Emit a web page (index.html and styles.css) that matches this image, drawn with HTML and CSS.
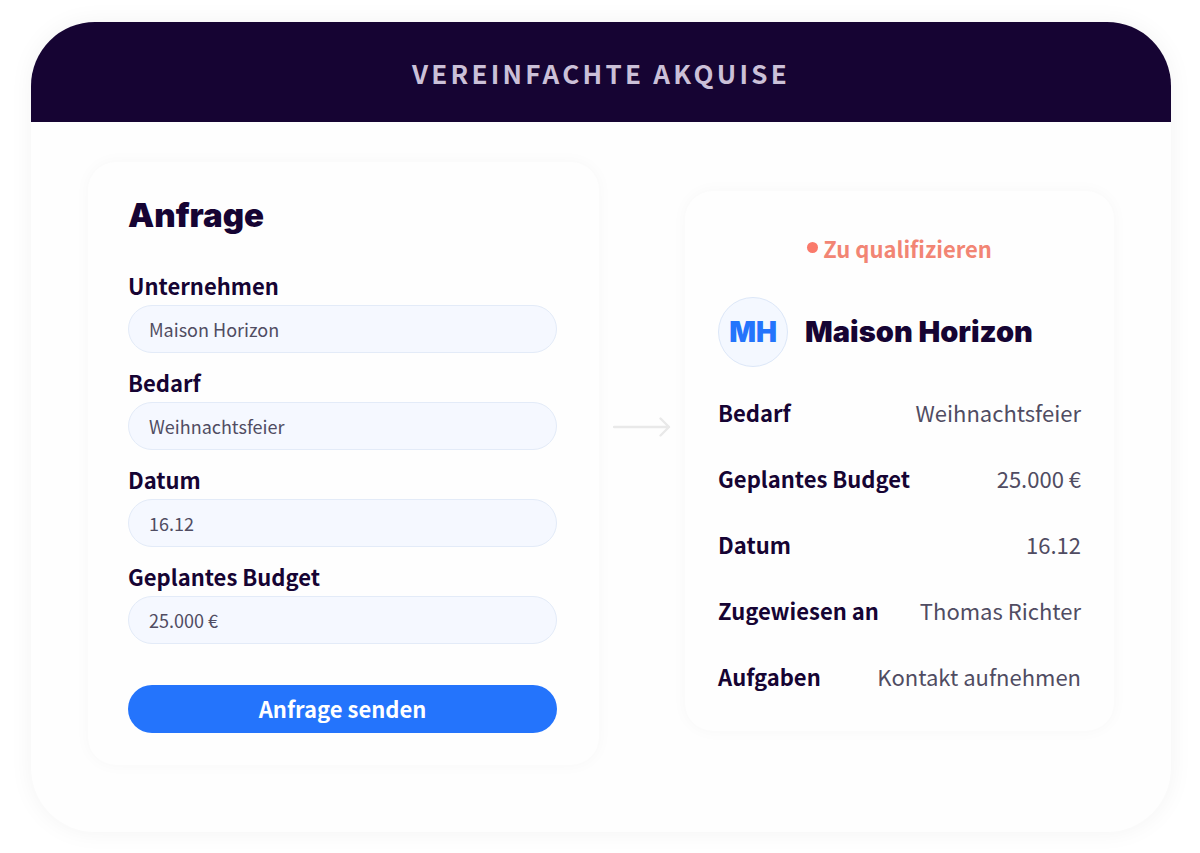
FILE: index.html
```html
<!DOCTYPE html>
<html lang="de">
<head>
    <meta charset="UTF-8">
    <meta name="viewport" content="width=device-width, initial-scale=1.0">
    <title>Vereinfachte Akquise</title>
    <link rel="stylesheet" href="styles.css">
</head>
<body>
    <div class="container">
        <header class="header">
            <h1>VEREINFACHTE AKQUISE</h1>
        </header>
        <main class="content">
            <form class="card form-card">
                <h2>Anfrage</h2>
                <div class="field">
                    <label for="company">Unternehmen</label>
                    <input type="text" id="company" value="Maison Horizon">
                </div>
                <div class="field">
                    <label for="need">Bedarf</label>
                    <input type="text" id="need" value="Weihnachtsfeier">
                </div>
                <div class="field">
                    <label for="date">Datum</label>
                    <input type="text" id="date" value="16.12">
                </div>
                <div class="field">
                    <label for="budget">Geplantes Budget</label>
                    <input type="text" id="budget" value="25.000 €">
                </div>
                <button type="button">Anfrage senden</button>
            </form>

            <svg class="arrow" width="58" height="20" viewBox="0 0 58 20" fill="none" stroke="#e9e9e9" stroke-width="2.4" stroke-linecap="round" stroke-linejoin="round" aria-hidden="true">
                <path d="M1 10H56M47.500 1.500L56 10L47.500 18.500"/>
            </svg>

            <section class="card lead-card">
                <div class="status"><span class="dot"></span>Zu qualifizieren</div>
                <div class="lead">
                    <div class="avatar">MH</div>
                    <h3>Maison Horizon</h3>
                </div>
                <dl class="details">
                    <div class="row"><dt>Bedarf</dt><dd>Weihnachtsfeier</dd></div>
                    <div class="row"><dt>Geplantes Budget</dt><dd>25.000 €</dd></div>
                    <div class="row"><dt>Datum</dt><dd>16.12</dd></div>
                    <div class="row"><dt>Zugewiesen an</dt><dd>Thomas Richter</dd></div>
                    <div class="row"><dt>Aufgaben</dt><dd>Kontakt aufnehmen</dd></div>
                </dl>
            </section>
        </main>
    </div>
</body>
</html>
```
FILE: styles.css
```css
* {
    box-sizing: border-box;
}
body {
    margin: 0;
    padding: 22px 29px 20px 31px;
    background-color: #fff;
    color: #160433;
    font-family: "Noto Sans CJK SC", "Open Sans", sans-serif;
    font-size: 22px;
    line-height: 34px;
}
h1, h2, h3, dl, dd {
    margin: 0;
}
.container {
    border-radius: 64px;
    background-color: #fefefe;
    box-shadow: 0 0 24px rgba(0, 0, 0, 0.05);
    overflow: hidden;
}
.header {
    padding: 33px 20px 31px;
    background-color: #160433;
    text-align: center;
}
.header h1 {
    color: #cbc0d8;
    font-size: 26px;
    line-height: 36px;
    font-weight: bold;
    letter-spacing: 0.125em;
}
.content {
    display: grid;
    grid-template-columns: 510fr auto 428fr;
    align-items: center;
    gap: 14px;
    padding: 40px 57px 67px;
}
.card {
    border-radius: 28px;
    background-color: #fefefe;
    box-shadow: 0 0 16px rgba(0, 0, 0, 0.03);
}
.form-card {
    padding: 31px 42px 32px 40px;
}
.form-card h2 {
    margin-bottom: 31px;
    font-family: Inter, sans-serif;
    font-size: 33px;
    line-height: 44px;
    font-weight: 900;
}
.field {
    margin-bottom: 12px;
}
.field label {
    display: block;
    margin-bottom: 3px;
    font-weight: bold;
}
.field input {
    display: block;
    width: 100%;
    height: 48px;
    padding: 0 20px;
    border: 1px solid #e3ebf8;
    border-radius: 24px;
    background-color: #f5f8ff;
    color: #504c62;
    font-family: inherit;
    font-size: 18px;
    outline: none;
}
.field input:focus {
    border-color: #2474fc;
}
button {
    display: block;
    width: 100%;
    height: 48px;
    margin-top: 41px;
    padding: 0 0 3px;
    border: none;
    border-radius: 24px;
    background-color: #2474fc;
    color: #fff;
    font-family: inherit;
    font-size: 22px;
    font-weight: bold;
    cursor: pointer;
}
.arrow {
    margin-bottom: 74px;
}
.lead-card {
    margin-bottom: 6px;
    padding: 40px 33px 38px;
}
.status {
    display: flex;
    align-items: center;
    justify-content: center;
    gap: 5px;
    margin-bottom: 32px;
    color: #f28574;
    font-weight: bold;
}
.dot {
    width: 11px;
    height: 11px;
    border-radius: 50%;
    background-color: #fa7a6b;
}
.lead {
    display: flex;
    align-items: center;
    gap: 17px;
    margin-bottom: 28px;
}
.avatar {
    display: flex;
    align-items: center;
    justify-content: center;
    width: 70px;
    height: 70px;
    border: 1px solid #dce7f8;
    border-radius: 50%;
    background-color: #f4f8ff;
    color: #2474fc;
    font-family: Inter, sans-serif;
    font-size: 28px;
    font-weight: 900;
}
.lead h3 {
    font-family: Inter, sans-serif;
    font-size: 29px;
    font-weight: 900;
    white-space: nowrap;
}
.details {
    display: grid;
    gap: 32px;
}
.row {
    display: flex;
    justify-content: space-between;
    white-space: nowrap;
}
.row dt {
    font-weight: bold;
}
.row dd {
    color: #504c62;
}
```
